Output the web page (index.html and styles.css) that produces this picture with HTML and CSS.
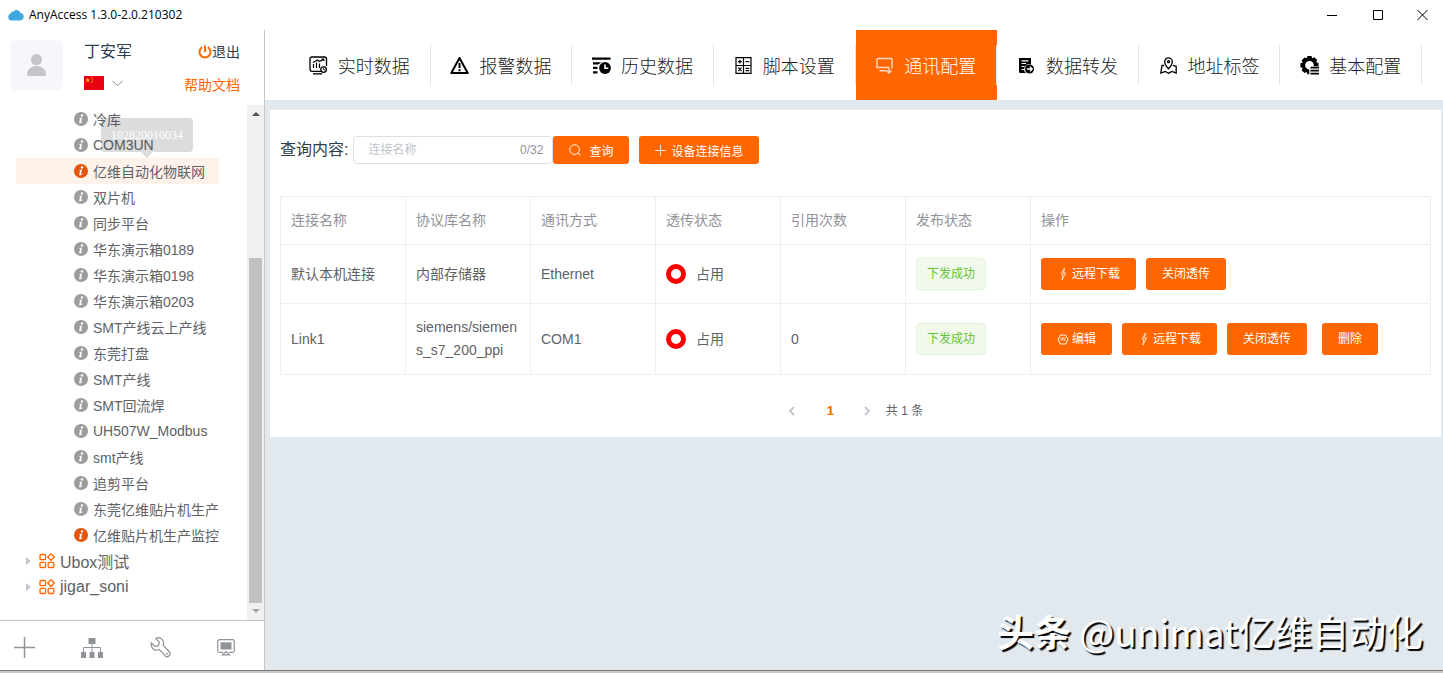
FILE: index.html
```html
<!DOCTYPE html>
<html lang="zh-CN">
<head>
<meta charset="utf-8">
<title>AnyAccess 1.3.0-2.0.210302</title>
<link rel="stylesheet" href="styles.css">
</head>
<body>
<svg class="defs" aria-hidden="true">
  <symbol id="i-info" viewBox="0 0 14 14"><circle cx="7" cy="7" r="7" fill="currentColor"/><circle cx="8" cy="3.4" r="1.2" fill="#fff"/><path d="M5.2 6.1 8.1 5.5 7 10.2Q7.3 10.5 8.6 9.6L8.8 10Q5.3 12.6 5.2 10.6L6.1 6.7 5.1 6.6Z" fill="#fff"/></symbol>
  <symbol id="i-group" viewBox="0 0 16 16"><g fill="none" stroke="currentColor" stroke-width="1.3"><rect x="1" y="1.5" width="5.6" height="5.2" rx="1"/><rect x="1" y="9.3" width="5.6" height="5.2" rx="1"/><rect x="9.2" y="9.3" width="5.6" height="5.2" rx="1"/><path d="M12 .8 15.3 4 12 7.3 8.7 4Z"/></g></symbol>
  <symbol id="i-bolt" viewBox="0 0 12 14"><path d="M7.5 1 4 7H6L5 13 8.6 6H6.5Z" fill="none" stroke="currentColor" stroke-width=".8"/></symbol>
</svg>
<div class="window">
  <header class="titlebar">
    <svg width="16" height="12" viewBox="0 0 16 12"><path d="M4 11.5A3.7 3.7 0 0 1 .2 8 3.500 3.500 0 0 1 2.6 4.6 3 3 0 0 1 5.6 2.4 4.2 4.2 0 0 1 12.6 4 3.800 3.800 0 0 1 12.4 11.5Z" fill="#40a7df"/></svg>
    <h1 class="app-name">AnyAccess 1.3.0-2.0.210302</h1>
    <div class="win-buttons">
      <button aria-label="最小化"><svg width="10" height="10" viewBox="0 0 10 10"><path d="M0 5.5H10" stroke="#000"/></svg></button>
      <button aria-label="最大化"><svg width="10" height="10" viewBox="0 0 10 10"><path d="M.5.5H9.5V9.5H.5Z" fill="none" stroke="#000"/></svg></button>
      <button aria-label="关闭"><svg width="11" height="10" viewBox="0 0 11 10"><path d="M.5 0 10.5 10M10.5 0 .5 10" stroke="#000"/></svg></button>
    </div>
  </header>

  <div class="body">
    <aside class="sidebar">
      <div class="user">
        <div class="avatar"><svg width="19" height="22" viewBox="0 0 19 22"><circle cx="9.5" cy="5.6" r="5.6" fill="#c4c5c8"/><path d="M0 20.500C0 9 19 9 19 20.500Q19 22 17.500 22H1.500Q0 22 0 20.500Z" fill="#c4c5c8"/></svg></div>
        <div class="user-main">
          <span class="user-name">丁安军</span>
          <button class="lang" aria-label="中文" aria-haspopup="listbox">
            <svg width="20" height="14" viewBox="0 0 20 14"><path d="M0 0H20V14H0Z" fill="#e60012"/><path d="M3.8 1.600 4.400 3.400H6.200L4.800 4.500 5.300 6.300 3.800 5.200 2.300 6.300 2.800 4.500 1.400 3.400H3.200Z" fill="#ffc400"/><g fill="#ffc400"><circle cx="7.400" cy="1.600" r=".6"/><circle cx="8.600" cy="3" r=".6"/><circle cx="8.600" cy="5" r=".6"/><circle cx="7.300" cy="6.500" r=".6"/></g></svg>
            <svg width="11" height="7" viewBox="0 0 11 7"><path d="M.5.8 5.500 5.800 10.500.8" fill="none" stroke="#888"/></svg>
          </button>
        </div>
        <div class="user-links">
          <button class="logout"><svg width="14" height="14" viewBox="0 0 14 14"><path d="M4.200 2.200A5.500 5.500 0 1 0 9.800 2.200M7 .5V7" fill="none" stroke="#ff6a00" stroke-width="2"/></svg>退出</button>
          <a class="help" href="#help">帮助文档</a>
        </div>
      </div>

      <div class="tree-area">
        <div class="tree-scroll">
          <ul class="tree">
            <li class="leaf"><svg><use href="#i-info"/></svg>冷库</li>
            <li class="leaf"><svg><use href="#i-info"/></svg>COM3UN</li>
            <li class="leaf on current"><svg><use href="#i-info"/></svg>亿维自动化物联网<span class="tip" role="tooltip">102820010034</span></li>
            <li class="leaf"><svg><use href="#i-info"/></svg>双片机</li>
            <li class="leaf"><svg><use href="#i-info"/></svg>同步平台</li>
            <li class="leaf"><svg><use href="#i-info"/></svg>华东演示箱0189</li>
            <li class="leaf"><svg><use href="#i-info"/></svg>华东演示箱0198</li>
            <li class="leaf"><svg><use href="#i-info"/></svg>华东演示箱0203</li>
            <li class="leaf"><svg><use href="#i-info"/></svg>SMT产线云上产线</li>
            <li class="leaf"><svg><use href="#i-info"/></svg>东莞打盘</li>
            <li class="leaf"><svg><use href="#i-info"/></svg>SMT产线</li>
            <li class="leaf"><svg><use href="#i-info"/></svg>SMT回流焊</li>
            <li class="leaf"><svg><use href="#i-info"/></svg>UH507W_Modbus</li>
            <li class="leaf"><svg><use href="#i-info"/></svg>smt产线</li>
            <li class="leaf"><svg><use href="#i-info"/></svg>追剪平台</li>
            <li class="leaf"><svg><use href="#i-info"/></svg>东莞亿维贴片机生产</li>
            <li class="leaf on"><svg><use href="#i-info"/></svg>亿维贴片机生产监控</li>
            <li class="group"><i class="caret"></i><svg><use href="#i-group"/></svg>Ubox测试</li>
            <li class="group"><i class="caret"></i><svg><use href="#i-group"/></svg>jigar_soni</li>
          </ul>
        </div>
        <div class="scrollbar" aria-hidden="true"><i class="arrow-up"></i><div class="rail"><div class="thumb"></div></div><i class="arrow-down"></i></div>
      </div>

      <div class="tools">
        <button aria-label="添加"><svg width="21" height="21" viewBox="0 0 21 21"><path d="M0 10.500H21M10.500 0V21" stroke="#909399" stroke-width="1.500"/></svg></button>
        <button aria-label="结构"><svg width="22" height="20" viewBox="0 0 22 20"><path d="M7.500 0H14.500V6H7.500ZM0 14H5V20H0ZM8.500 14H13.500V20H8.500ZM17 14H22V20H17Z" fill="#909399"/><path d="M11 6V14M2.500 14V9.500H19.500V14" fill="none" stroke="#909399"/></svg></button>
        <button aria-label="维护"><svg width="21" height="21" viewBox="0 0 21 21"><path d="M6.500 1.200C10.500-.4 14.800 3.500 13.200 8.400L19.400 14.800C21.500 17.500 17.800 21.200 15.200 18.900L9.200 12.500C4.500 14.700.3 10.600 1.300 6L5 9.400C7.800 9.800 9.600 7.500 9.200 5.100L5.800 1.700Z" fill="none" stroke="#909399" stroke-width="1.300"/><circle cx="16.800" cy="16.800" r="1" fill="#909399"/></svg></button>
        <button aria-label="监控"><svg width="18" height="17" viewBox="0 0 18 17"><path d="M6 13.400H2.500A1.800 1.800 0 0 1 .7 11.600V2.500A1.800 1.800 0 0 1 2.500.7H15.500A1.800 1.800 0 0 1 17.300 2.500V11.600A1.800 1.800 0 0 1 15.500 13.400H12M9 12.500 5.500 15.800H12.500Z" fill="none" stroke="#909399" stroke-width="1.200"/><path d="M3.500 3.300H14.500V10.500H3.500Z" fill="#909399"/></svg></button>
      </div>
    </aside>

    <main class="main">
      <nav class="nav">
        <a href="#realtime"><svg viewBox="0 0 19 19"><g fill="none" stroke="currentColor" stroke-width="1.300"><path d="M12 15.300H3A2 2 0 0 1 1 13.300V3A2 2 0 0 1 3 1H15.500A2 2 0 0 1 17.500 3V10"/><path d="M4.500 12V8M7.500 12V6.500M10.500 12V7.500M4 6.500 8.500 4 10.500 5.500 14.500 3.200M12.500 3H14.800V5" stroke-width="1.200"/><circle cx="14.600" cy="13.600" r="2.800"/><path d="M14.500 12V13.800H16" stroke-width=".8"/></g><path d="M4 17.200H13V18.500H4Z" fill="currentColor"/></svg>实时数据</a>
        <a href="#alarm"><svg viewBox="0 0 19 19"><path d="M9.500 2 17.700 17H1.300Z" fill="none" stroke="currentColor" stroke-width="2" stroke-linejoin="round"/><path d="M9.500 7V12M9.500 13.300V15.200" stroke="currentColor" stroke-width="2"/></svg>报警数据</a>
        <a href="#history"><svg viewBox="0 0 19 19"><path d="M0 1.500H18.500V3.800H0ZM1 6.200H9L6.500 8.400H1ZM1 10.800H5.500V13H1ZM1 15.200H5.500V17.400H1Z" fill="currentColor"/><circle cx="13" cy="12" r="5.900" fill="currentColor"/><path d="M13 8.500V12.300H16.300" fill="none" stroke="#fff" stroke-width="1.600"/></svg>历史数据</a>
        <a href="#script"><svg viewBox="0 0 19 19"><g fill="none" stroke="currentColor" stroke-width="1.200"><path d="M2 1.700H17V17.300H2ZM9.500 1.700V17.300M2 9.500H17M4 5.600H7.800M5.900 3.700V7.500M11.500 5.600H15.200M4.300 11.700 7.500 15M7.500 11.700 4.300 15M11.500 12.300H15.200M11.500 14.700H15.200"/></g></svg>脚本设置</a>
        <a href="#comm" class="active" aria-current="page"><svg viewBox="0 0 19 19"><g fill="none" stroke="currentColor" stroke-width="1.400"><path d="M17 12.500V3.500A1 1 0 0 0 16 2.500H3A1 1 0 0 0 2 3.500V11.500H14V17M4.500 14.800H11M11.300 14.500 13.800 17 16.500 14.500"/></g></svg>通讯配置</a>
        <a href="#forward"><svg viewBox="0 0 19 19"><path d="M2 2H14V8.500A5 5 0 0 0 9 17H2.800L2 16Z" fill="currentColor"/><path d="M4.500 4.800H11.500M4.500 7.500H9M4.500 10.500H7.500M4.500 13.500H7" stroke="#fff" stroke-width="1.200"/><circle cx="12.500" cy="13" r="4.500" fill="currentColor"/><path d="M9.800 13H15M13 10.800 15.200 13 13 15.200" fill="none" stroke="#fff" stroke-width="1.400"/></svg>数据转发</a>
        <a href="#address"><svg viewBox="0 0 19 19"><g fill="none" stroke="currentColor" stroke-width="1.300"><path d="M9.500 12.800C7 10 5.700 8 5.700 5.700A3.800 3.800 0 0 1 13.300 5.700C13.300 8 12 10 9.500 12.800Z"/><circle cx="9.500" cy="5.700" r="1"/><path d="M5.200 9.500H3L1.800 17 6.300 15.500 9.500 17.200 13 15.500 17.200 17V10.300L13.800 9.300"/></g></svg>地址标签</a>
        <a href="#basic"><svg viewBox="0 0 19 19"><path d="M7.500 0H11.500L12.200 2.200 14.400 1.300 17.200 4 16.200 6.200 18.500 7V10.200H13.600A4.300 4.300 0 1 0 9.300 13.500V18.300H7.400L6.700 16.100 4.500 17.100 1.700 14.300 2.700 12 .4 11.300V7.300L2.700 6.500 1.700 4.200 4.500 1.400 6.700 2.300Z" fill="currentColor"/><path d="M10.500 11.700H19M10.500 14.700H19M10.500 17.700H19" stroke="currentColor" stroke-width="1.700"/></svg>基本配置</a>
      </nav>

      <section class="card">
        <form class="query">
          <label for="q">查询内容:</label>
          <div class="field"><input id="q" type="text" maxlength="32" placeholder="连接名称"><span class="count">0/32</span></div>
          <button type="button" class="btn small search"><svg width="12" height="12" viewBox="0 0 12 12"><g fill="none" stroke="currentColor"><circle cx="5.600" cy="5.600" r="4.800"/><path d="M9 9 11.500 11.500"/></g></svg>查询</button>
          <button type="button" class="btn small add"><svg width="11" height="11" viewBox="0 0 11 11"><path d="M0 5.500H11M5.500 0V11" stroke="currentColor" stroke-opacity=".8"/></svg>设备连接信息</button>
        </form>

        <table class="links">
          <colgroup><col class="c"><col class="c"><col class="c"><col class="c"><col class="c"><col class="c"><col></colgroup>
          <thead><tr><th>连接名称</th><th>协议库名称</th><th>通讯方式</th><th>透传状态</th><th>引用次数</th><th>发布状态</th><th>操作</th></tr></thead>
          <tbody>
            <tr>
              <td>默认本机连接</td><td>内部存储器</td><td>Ethernet</td>
              <td><div class="state"><i class="ring"></i>占用</div></td><td></td>
              <td><span class="tag">下发成功</span></td>
              <td><div class="ops">
                <button class="btn"><svg width="12" height="14"><use href="#i-bolt"/></svg>远程下载</button>
                <button class="btn">关闭透传</button>
              </div></td>
            </tr>
            <tr>
              <td>Link1</td><td>siemens/siemens_s7_200_ppi</td><td>COM1</td>
              <td><div class="state"><i class="ring"></i>占用</div></td><td>0</td>
              <td><span class="tag">下发成功</span></td>
              <td><div class="ops">
                <button class="btn"><svg width="12" height="11" viewBox="0 0 12 11"><g fill="none" stroke="currentColor"><path d="M3.500 1H8.500L11 5.500 8.500 10H3.500L1 5.500Z"/><path d="M4 4H8M4 4V7M6 4V7M8 4V6.500H7" stroke-width=".7"/></g></svg>编辑</button>
                <button class="btn"><svg width="12" height="14"><use href="#i-bolt"/></svg>远程下载</button>
                <button class="btn">关闭透传</button>
                <button class="btn remove">删除</button>
              </div></td>
            </tr>
          </tbody>
        </table>

        <div class="pager">
          <button aria-label="上一页" disabled><svg width="7" height="10" viewBox="0 0 7 10"><path d="M6 1 2 5 6 9" fill="none" stroke="#c0c4cc" stroke-width="1.800"/></svg></button>
          <button class="page" aria-current="page">1</button>
          <button aria-label="下一页" disabled><svg width="7" height="10" viewBox="0 0 7 10"><path d="M1 1 5 5 1 9" fill="none" stroke="#c0c4cc" stroke-width="1.800"/></svg></button>
          <span class="total">共 1 条</span>
        </div>
      </section>
      <p class="watermark"><b>头条</b> @unimat亿维自动化</p>
    </main>
  </div>
</div>
</body>
</html>
```
FILE: styles.css
```css
:root {
  --orange: #ff6600;
  --line: #ebeef5;
  --backdrop: #e1e8ee;
}

* { box-sizing: border-box; }

body {
  margin: 0;
  font-family: "Liberation Sans", "Noto Sans CJK SC", sans-serif;
  font-size: 14px;
  color: #606266;
  background: #c8c8c8;
}

button, input { font: inherit; color: inherit; }
button { border: 0; padding: 0; background: none; display: flex; align-items: center; justify-content: center; }
svg { flex: none; display: block; }
.defs { position: absolute; width: 0; height: 0; }

.window {
  height: calc(100vh - 2px);
  border-bottom: 1px solid #777;
  background: #fff;
  display: flex;
  flex-direction: column;
}

.titlebar { height: 30px; flex: none; padding-left: 8px; display: flex; align-items: center; gap: 5px; }
.app-name { flex: 1; margin: 0; font: 400 12px/30px "Open Sans", "Noto Sans", sans-serif; color: #000; }
.win-buttons { display: flex; height: 28px; }
.win-buttons button { width: 46px; }
.win-buttons button:last-child { width: 42px; }

.body { flex: 1; min-height: 0; display: flex; }

.sidebar { width: 265px; flex: none; border-right: 1px solid #c6c6c6; display: flex; flex-direction: column; }

.user { height: 75px; flex: none; padding: 10px 24px 0 10px; display: flex; align-items: flex-start; color: #2c3e50; }
.avatar { width: 53px; height: 50px; border-radius: 6px; background: #f5f7fc; display: flex; align-items: center; justify-content: center; }
.user-main { flex: 1; margin-left: 21px; display: flex; flex-direction: column; align-items: flex-start; gap: 12px; }
.user-name { font-size: 16px; line-height: 24px; }
.lang { gap: 8px; }
.user-links { display: flex; flex-direction: column; align-items: flex-end; gap: 9px; line-height: 24px; }
.help { color: var(--orange); text-decoration: none; }

.tree-area { flex: 1; min-height: 0; display: flex; border-bottom: 1px solid #c6c6c6; }
.tree-scroll { flex: 1; padding: 1px 0 0 16px; overflow: hidden; }
.tree { width: max-content; margin: 0; padding: 0; list-style: none; }
.leaf, .group { height: 26px; display: flex; align-items: center; }
.leaf { position: relative; padding-left: 58px; gap: 5px; }
.leaf svg { width: 14px; height: 14px; color: #9c9c9c; }
.leaf.on svg { color: #e4540b; }
.leaf.current { background: #fff2ea; }
.group { padding-left: 10px; gap: 5px; font-size: 16px; }
.group svg { width: 16px; height: 16px; color: var(--orange); margin-left: 3px; }
.caret { border: 4px solid transparent; border-left: 5px solid #c0c4cc; border-right: 0; }

.tip {
  position: absolute;
  left: 85px;
  bottom: 32px;
  padding: 10px;
  border-radius: 4px;
  background: rgba(48, 49, 51, .17);
  color: #fff;
  font: 12px/14px "Liberation Serif", serif;
}
.tip::after {
  content: "";
  position: absolute;
  top: 100%;
  left: 40px;
  border: 6px solid transparent;
  border-top-color: rgba(48, 49, 51, .17);
  border-bottom: 0;
}

.scrollbar { width: 17px; background: #f1f1f1; display: flex; flex-direction: column; align-items: center; padding: 7px 0; }
.rail { flex: 1; width: 13px; padding: 142px 0 6px; display: flex; }
.thumb { flex: 1; background: #c1c1c1; }
.arrow-up { border: 4px solid transparent; border-bottom-color: #505050; border-top: 0; }
.arrow-down { border: 4px solid transparent; border-top-color: #a3a3a3; border-bottom: 0; }

.tools { height: 49px; flex: none; padding: 4px 29px 0 14px; display: flex; align-items: center; justify-content: space-between; }

.main { position: relative; flex: 1; min-width: 0; background: var(--backdrop); }

.nav { height: 70px; padding: 0 21px 0 24px; background: #fff; display: flex; }
.nav a {
  flex: 1;
  padding-right: 1px;
  display: flex;
  align-items: center;
  justify-content: center;
  gap: 10px;
  font-size: 18px;
  font-weight: 300;
  color: #222;
  text-decoration: none;
  background: linear-gradient(#e2e2ea, #e2e2ea) right / 1px 40px no-repeat;
}
.nav a svg { width: 19px; height: 19px; color: #000; }
.nav a.active { background-color: var(--orange); color: #fff; }
.nav a.active svg { color: #ffd9bf; }

.card { margin: 10px 2px 0 5px; padding: 26px 10px 12px; background: #fff; }

.query { display: flex; align-items: center; height: 28px; }
.query label { font-size: 16px; line-height: 24px; color: #2c3e50; margin-right: 5px; }
.field { width: 200px; height: 28px; border: 1px solid #dcdfe6; border-radius: 4px; padding: 0 9px 0 14px; display: flex; align-items: center; font-size: 12px; color: #909399; }
.field input { flex: 1; min-width: 0; border: 0; padding: 0; outline: 0; background: none; }
.field input::placeholder { color: #c0c4cc; }

.btn { height: 32px; padding: 0 16px; border-radius: 3px; background: var(--orange); color: #fff; font-size: 12px; gap: 3px; white-space: nowrap; }
.btn.small { height: 28px; }
.btn.search { gap: 8px; }
.btn.add { margin-left: 10px; gap: 5px; }

.links { width: 100%; margin-top: 32px; table-layout: fixed; border-collapse: collapse; line-height: 23px; }
.links .c { width: 125px; }
.links th, .links td { border: 1px solid var(--line); padding: 12px 10px; text-align: left; font-weight: 400; overflow-wrap: anywhere; }
.links th { color: #909399; }
.links tbody td { height: 59px; }
.links tbody td:nth-last-child(-n+2) { padding-top: 0; padding-bottom: 0; }

.state { display: flex; align-items: center; gap: 10px; }
.ring { width: 20px; height: 20px; border: 5px solid #f00; border-radius: 50%; }
.tag { display: block; width: max-content; padding: 0 10px; border: 1px solid #e1f3d8; border-radius: 4px; background: #f0f9eb; color: #67c23a; font-size: 12px; line-height: 30px; }
.ops { display: flex; gap: 10px; }
.ops .remove { margin-left: 5px; }

.pager { margin-top: 22px; padding-right: 16px; display: flex; align-items: center; justify-content: center; font-size: 13px; line-height: 28px; }
.pager button { width: 39px; height: 28px; }
.pager .page { color: var(--orange); font-weight: 700; }
.pager .page + button { width: 36px; }
.pager .total { font-size: 12px; }

.watermark {
  position: absolute;
  right: 20px;
  bottom: 12px;
  margin: 0;
  font: 400 37px/54px "Noto Sans CJK SC", sans-serif;
  color: #fff;
  text-shadow: 2px 2px 1px #000;
}
```
